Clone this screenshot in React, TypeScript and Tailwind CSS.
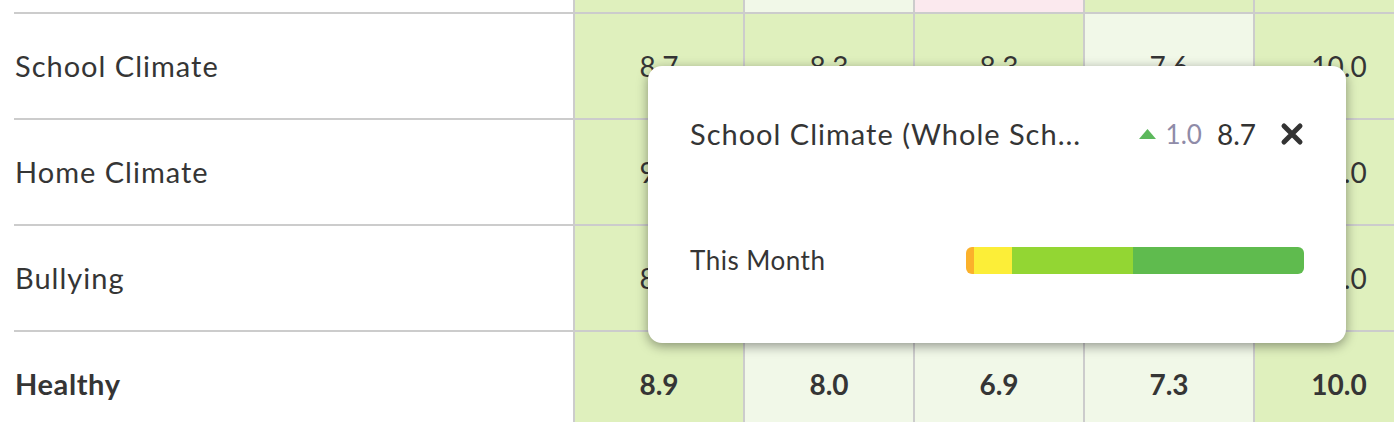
import React from 'react';

type Tone = 'green' | 'light' | 'pink';

interface Row {
  label: string;
  bold?: boolean;
  cells: Array<{ value: string; tone: Tone }>;
}

const toneClass: Record<Tone, string> = {
  green: 'bg-[#dff0bd]',
  light: 'bg-[#f1f8e8]',
  pink: 'bg-[#fbe9ee]',
};

const topTones: Tone[] = ['green', 'light', 'pink', 'green', 'green'];

const rows: Row[] = [
  {
    label: 'School Climate',
    cells: [
      { value: '8.7', tone: 'green' },
      { value: '8.3', tone: 'green' },
      { value: '8.3', tone: 'green' },
      { value: '7.6', tone: 'light' },
      { value: '10.0', tone: 'green' },
    ],
  },
  {
    label: 'Home Climate',
    cells: [
      { value: '9.1', tone: 'green' },
      { value: '8.6', tone: 'green' },
      { value: '8.4', tone: 'green' },
      { value: '8.2', tone: 'green' },
      { value: '10.0', tone: 'green' },
    ],
  },
  {
    label: 'Bullying',
    cells: [
      { value: '8.5', tone: 'green' },
      { value: '8.1', tone: 'green' },
      { value: '8.2', tone: 'green' },
      { value: '8.0', tone: 'green' },
      { value: '10.0', tone: 'green' },
    ],
  },
  {
    label: 'Healthy',
    bold: true,
    cells: [
      { value: '8.9', tone: 'green' },
      { value: '8.0', tone: 'light' },
      { value: '6.9', tone: 'light' },
      { value: '7.3', tone: 'light' },
      { value: '10.0', tone: 'green' },
    ],
  },
];

const bar = [
  { w: '2.4%', c: 'bg-[#fbb12b]' },
  { w: '11.2%', c: 'bg-[#fcee38]' },
  { w: '35.9%', c: 'bg-[#93d633]' },
  { w: '50.5%', c: 'bg-[#5fbb4e]' },
];

const App: React.FC = () => {
  return (
    <div className="relative w-[1394px] h-[422px] overflow-hidden bg-white text-[#353535] font-['Lato','Liberation_Sans',sans-serif]">
      <div className="ml-[14px] w-[1409px]">
        {/* partial row above */}
        <div className="grid grid-cols-[559px_repeat(5,170px)] h-[12px]">
          <div />
          {topTones.map((t, i) => (
            <div key={i} className={`border-l-2 border-[#cccccc] ${toneClass[t]}`} />
          ))}
        </div>

        {rows.map(row => (
          <div
            key={row.label}
            className="grid grid-cols-[559px_repeat(5,170px)] h-[106px] border-t-2 border-[#cccccc]"
          >
            <div
              className={`flex items-center pl-px text-[29px] ${row.bold ? 'font-bold tracking-[0.6px]' : 'tracking-[1px]'}`}
            >
              {row.label}
            </div>
            {row.cells.map((cell, i) => (
              <div
                key={i}
                className={`flex items-center justify-center border-l-2 border-[#cccccc] text-[28px] ${toneClass[cell.tone]} ${row.bold ? 'font-bold' : ''}`}
              >
                {cell.value}
              </div>
            ))}
          </div>
        ))}
      </div>

      {/* popover */}
      <div className="absolute left-[648px] top-[66px] w-[698px] h-[277px] rounded-[14px] bg-white shadow-[0_3px_12px_rgba(0,0,0,0.4)] px-[42px] flex flex-col">
        <div className="flex items-center justify-between h-[136px]">
          <span className="text-[29px] tracking-[1px] whitespace-nowrap">School Climate (Whole Sch...</span>
          <div className="flex items-center">
            <svg width="17" height="10" viewBox="0 0 17 10" className="mr-[10px]">
              <polygon points="8.5,0 17,10 0,10" fill="#5cb85c" />
            </svg>
            <span className="text-[26px] text-[#8f8ba8] mr-[15px]">1.0</span>
            <span className="text-[28px] text-[#333] mr-[24px]">8.7</span>
            <svg width="24" height="24" viewBox="0 0 24 24">
              <path d="M4 4 L20 20 M20 4 L4 20" stroke="#333" strokeWidth="5" strokeLinecap="round" />
            </svg>
          </div>
        </div>
        <div className="flex items-center justify-between h-[116px]">
          <span className="text-[26px] tracking-[0.5px]">This Month</span>
          <div className="flex w-[338px] h-[27px] rounded-[6px] overflow-hidden">
            {bar.map((s, i) => (
              <div key={i} className={s.c} style={{ width: s.w }} />
            ))}
          </div>
        </div>
      </div>
    </div>
  );
};

export default App;
